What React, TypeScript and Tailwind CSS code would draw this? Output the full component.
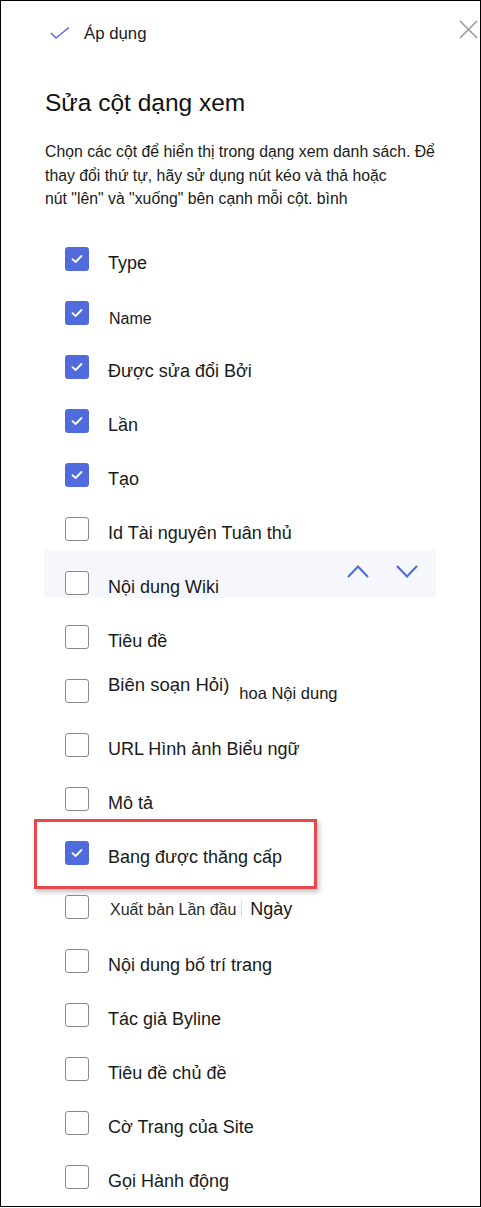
import React from 'react';

type Col = {
    label: string;
    checked?: boolean;
    extra?: string;
    kind?: 'name' | 'bien' | 'xuat';
};

const columns: Col[] = [
    { label: 'Type', checked: true },
    { label: 'Name', checked: true, kind: 'name' },
    { label: 'Được sửa đổi Bởi', checked: true },
    { label: 'Lần', checked: true },
    { label: 'Tạo', checked: true },
    { label: 'Id Tài nguyên Tuân thủ' },
    { label: 'Nội dung Wiki' },
    { label: 'Tiêu đề' },
    { label: 'Biên soạn Hỏi)', extra: 'hoa Nội dung', kind: 'bien' },
    { label: 'URL Hình ảnh Biểu ngữ' },
    { label: 'Mô tả' },
    { label: 'Bang được thăng cấp', checked: true },
    { label: 'Xuất bản Lần đầu', extra: 'Ngày', kind: 'xuat' },
    { label: 'Nội dung bố trí trang' },
    { label: 'Tác giả Byline' },
    { label: 'Tiêu đề chủ đề' },
    { label: 'Cờ Trang của Site' },
    { label: 'Gọi Hành động' },
];

const CheckBox = ({ checked }: { checked?: boolean }) =>
    checked ? (
        <div className="w-6 h-6 rounded-[3px] bg-[#4f6bdc] flex items-center justify-center shrink-0">
            <svg width="12" height="10" viewBox="0 0 12 10" fill="none">
                <path d="M1.5 5.2 L4.6 8 L10.5 2" stroke="white" strokeWidth="1.8" strokeLinecap="round" strokeLinejoin="round" />
            </svg>
        </div>
    ) : (
        <div className="w-6 h-6 rounded-[3px] border border-[#8a8a8a] bg-white shrink-0" />
    );

const Row = ({ col }: { col: Col }) => {
    const wiki = col.label === 'Nội dung Wiki';
    const promoted = col.label === 'Bang được thăng cấp';
    return (
        <div className="relative h-[54px] flex items-start pl-[20px]">
            {wiki && <div className="absolute left-[-1px] w-[392px] top-[-18px] h-[48px] bg-[#f5f7fd]" />}
            {promoted && (
                <div className="absolute left-[-11px] w-[283px] top-[-19px] h-[70px] border-[3px] border-[#e8474b] shadow-[2px_3px_5px_rgba(0,0,0,0.25)]" />
            )}
            <div className="relative mt-[3px]">
                <CheckBox checked={col.checked} />
            </div>
            {col.kind === 'name' ? (
                <span className="relative ml-[20px] mt-[9px] text-[16px] leading-[24px]">{col.label}</span>
            ) : col.kind === 'bien' ? (
                <div className="relative ml-[19px] flex items-baseline mt-[-3px]">
                    <span className="text-[18.5px] leading-[24px]">{col.label}</span>
                    <span className="ml-[10px] text-[16.5px] leading-[24px] relative top-[8px]">{col.extra}</span>
                </div>
            ) : col.kind === 'xuat' ? (
                <div className="relative ml-[21px] mt-[5px] flex items-baseline">
                    <span className="text-[16px] leading-[24px] text-[#2a2a2a]">{col.label}</span>
                    <span className="ml-[5px] w-px h-[16px] bg-[#d8d8d8] self-center" />
                    <span className="ml-[8px] text-[18px] leading-[24px]">{col.extra}</span>
                </div>
            ) : (
                <span className="relative ml-[19px] mt-[7px] text-[18px] leading-[24px]">{col.label}</span>
            )}
            {wiki && (
                <div className="relative ml-auto mr-[62px] mt-[-3px] flex gap-[27px]">
                    <svg width="22" height="13" viewBox="0 0 22 13" fill="none">
                        <path d="M1 12 L11 1.5 L21 12" stroke="#4a6ad8" strokeWidth="2" />
                    </svg>
                    <svg width="22" height="13" viewBox="0 0 22 13" fill="none">
                        <path d="M1 1 L11 11.5 L21 1" stroke="#4a6ad8" strokeWidth="2" />
                    </svg>
                </div>
            )}
        </div>
    );
};

export default function App() {
    return (
        <div className="w-[481px] h-[1207px] bg-white border border-black text-[#1a1a1a] font-['Liberation_Sans',Arial,sans-serif] overflow-hidden">
            <div className="h-[64px] flex items-center pl-[49px] pr-[2px]">
                <svg width="20" height="13" viewBox="0 0 20 13" fill="none">
                    <path d="M1 6 L6 11 L19 0.5" stroke="#5b6fd6" strokeWidth="1.6" />
                </svg>
                <span className="ml-[14px] text-[16.8px] mt-[2px]">Áp dụng</span>
                <svg className="ml-auto self-start mt-[19px]" width="19" height="19" viewBox="0 0 19 19" fill="none">
                    <path d="M1 1 L18 18 M18 1 L1 18" stroke="#9a9a9a" strokeWidth="1.6" />
                </svg>
            </div>

            <div className="pl-[44px]">
                <h1 className="mt-[23px] text-[24.5px] leading-[30px] font-normal text-[#111]">Sửa cột dạng xem</h1>
                <p className="mt-[22px] text-[15.8px] leading-[23.5px] whitespace-nowrap text-[#1a1a1a]">
                    Chọn các cột để hiển thị trong dạng xem danh sách. Để
                    <br />
                    thay đổi thứ tự, hãy sử dụng nút kéo và thả hoặc
                    <br />
                    nút "lên" và "xuống" bên cạnh mỗi cột. bình
                </p>

                <div className="mt-[33px]">
                    {columns.map((c) => (
                        <Row key={c.label} col={c} />
                    ))}
                </div>
            </div>
        </div>
    );
}
